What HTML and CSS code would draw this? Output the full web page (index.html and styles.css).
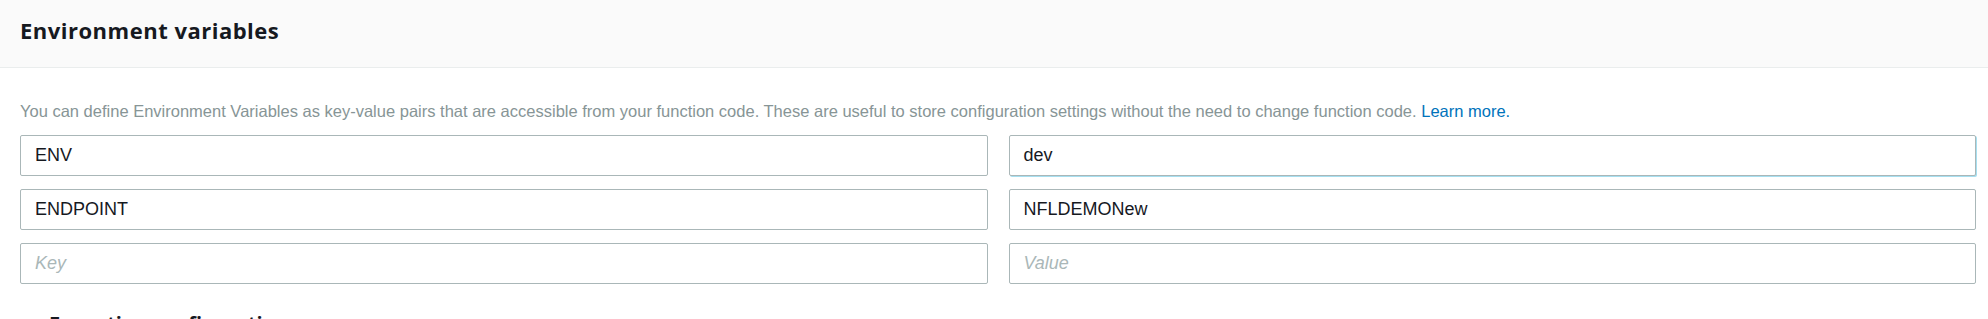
FILE: index.html
```html
<!DOCTYPE html>
<html>
<head>
<meta charset="utf-8">
<link rel="stylesheet" href="styles.css">
</head>
<body>
<div class="panel">
  <div class="panel-header">
    <h2 class="panel-title">Environment variables</h2>
  </div>
  <div class="panel-body">
    <p class="desc">You can define Environment Variables as key-value pairs that are accessible from your function code. These are useful to store configuration settings without the need to change function code. <a class="link" href="#">Learn more.</a></p>
    <div class="grid">
      <div class="field"><span class="val">ENV</span></div>
      <div class="field focused"><span class="val">dev</span></div>
      <div class="field"><span class="val">ENDPOINT</span></div>
      <div class="field"><span class="val">NFLDEMONew</span></div>
      <div class="field"><span class="ph">Key</span></div>
      <div class="field"><span class="ph">Value</span></div>
    </div>
  </div>
  <div class="next">
    <span class="caret">&#9656;</span>
    <span class="next-title">Execution configuration</span>
  </div>
</div>
</body>
</html>
```
FILE: styles.css
```css
html, body {
  margin: 0;
  padding: 0;
  background: #ffffff;
}
body {
  font-family: "Liberation Sans", Arial, sans-serif;
  color: #16191f;
  overflow: hidden;
}
.panel-header {
  height: 68px;
  box-sizing: border-box;
  background: #fafafa;
  border-bottom: 1px solid #eaeded;
  display: flex;
  align-items: center;
  padding: 0 20px 8px;
}
.panel-title {
  margin: 0;
  font-family: "Open Sans", sans-serif;
  font-size: 22px;
  letter-spacing: 0.5px;
  font-weight: 700;
  color: #16191f;
  line-height: 26px;
}
.panel-body {
  padding: 33px 12px 0 20px;
}
.desc {
  margin: 0 0 14px;
  font-size: 16.5px;
  line-height: 20px;
  color: #879596;
}
.link {
  color: #0073bb;
  text-decoration: none;
}
.grid {
  display: grid;
  grid-template-columns: 1fr 1fr;
  column-gap: 21px;
  row-gap: 13px;
}
.field {
  height: 41px;
  box-sizing: border-box;
  border: 1px solid #aab7b8;
  border-radius: 2px;
  display: flex;
  align-items: center;
  padding: 0 14px;
  font-size: 18px;
  background: #fff;
}
.field.focused {
  box-shadow: 1px 1px 0 0 #a6dff0;
}
.val {
  color: #16191f;
}
.ph {
  color: #aab7b8;
  font-style: italic;
}
.next {
  display: flex;
  align-items: center;
  gap: 15px;
  padding: 26px 20px 0 25px;
}
.caret {
  font-size: 18px;
  color: #545b64;
}
.next-title {
  font-family: "Open Sans", sans-serif;
  font-size: 20px;
  font-weight: 700;
  color: #16191f;
}
```
